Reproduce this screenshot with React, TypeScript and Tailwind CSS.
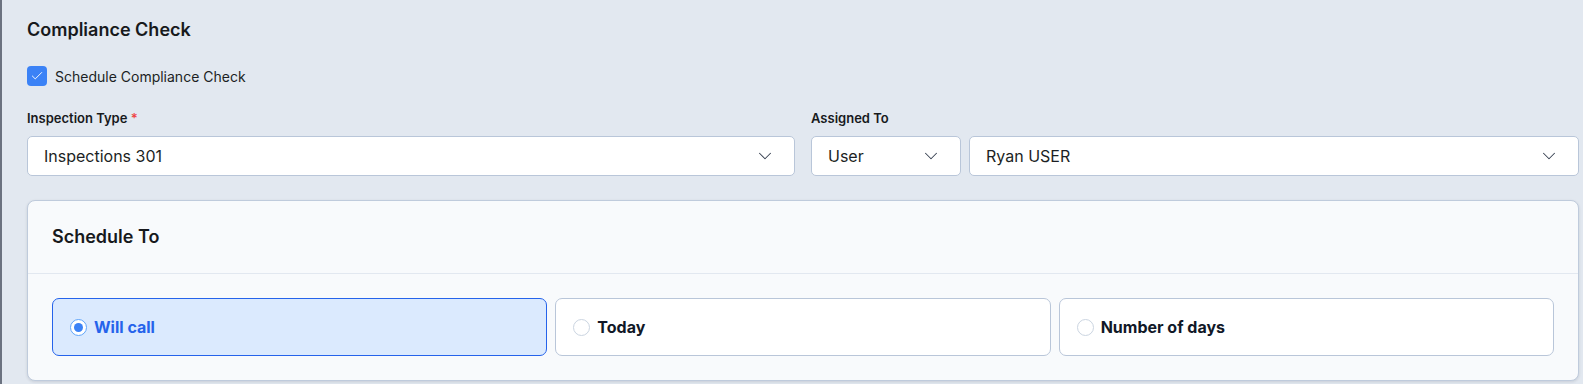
import { useState } from 'react'
import { ChevronDown, Check } from 'lucide-react'

const options = ['Will call', 'Today', 'Number of days']

function Select({ value, className }: { value: string; className?: string }) {
  return (
    <div className={`flex h-10 items-center justify-between rounded-[5px] border border-[#b9c6d9] bg-white pl-4 pr-[18px] ${className ?? ''}`}>
      <span className="text-[16px] text-[#1c1f24]">{value}</span>
      <ChevronDown size={22} strokeWidth={1.1} className="text-[#374151]" />
    </div>
  )
}

export default function App() {
  const [checked, setChecked] = useState(true)
  const [selected, setSelected] = useState(0)

  return (
    <div className="flex min-h-[384px] bg-[#e2e8f0] font-['Inter',sans-serif]">
      <div className="w-[2px] shrink-0 bg-[#6b7280]" />
      <div className="flex-1 pl-[25px] pr-[4px] pt-4">
        <h2 className="text-[18px] leading-7 font-semibold text-[#17191c]">Compliance Check</h2>

        {/* Checkbox */}
        <label className="mt-[22px] flex h-5 items-center gap-2 cursor-pointer" onClick={() => setChecked(!checked)}>
          <span className={`flex h-5 w-5 items-center justify-center rounded-[4px] ${checked ? 'bg-[#3b82f6]' : 'border border-[#b9c6d9] bg-white'}`}>
            {checked && <Check size={14} strokeWidth={1.6} className="text-white" />}
          </span>
          <span className="text-[14px] text-[#1c1f24]">Schedule Compliance Check</span>
        </label>

        {/* Fields */}
        <div className="mt-[22px] grid grid-cols-2 gap-4">
          <div>
            <div className="text-[13px] leading-5 font-semibold text-[#17191c]">
              Inspection Type <span className="text-[#ef4444]">*</span>
            </div>
            <Select value="Inspections 301" className="mt-2" />
          </div>
          <div>
            <div className="text-[13px] leading-5 font-semibold text-[#17191c]">Assigned To</div>
            <div className="mt-2 flex gap-2">
              <Select value="User" className="w-[150px]" />
              <Select value="Ryan USER" className="flex-1" />
            </div>
          </div>
        </div>

        {/* Schedule To card */}
        <div className="mt-6 rounded-lg border border-[#bfcbdc] bg-[#f8fafc] shadow-[0_1px_3px_rgba(15,23,42,0.12)]">
          <div className="border-b border-[#e2e8f0] px-6 py-6">
            <h3 className="text-[18px] leading-6 font-semibold text-[#17191c]">Schedule To</h3>
          </div>
          <div className="grid grid-cols-3 gap-2 px-6 py-6">
            {options.map((opt, i) => {
              const active = selected === i
              return (
                <button
                  key={opt}
                  onClick={() => setSelected(i)}
                  className={`flex h-[58px] items-center gap-[7px] rounded-[7px] border pl-[17px] text-left ${active ? 'border-[#2563eb] bg-[#dbeafe]' : 'border-[#b9c6d9] bg-white'}`}
                >
                  <span className={`flex h-[17px] w-[17px] items-center justify-center rounded-full border bg-white ${active ? 'border-[#60a5fa]' : 'border-[#cbd5e1]'}`}>
                    {active && <span className="h-[9px] w-[9px] rounded-full bg-[#3b82f6]" />}
                  </span>
                  <span className={`text-[16px] font-bold ${active ? 'text-[#2563eb]' : 'text-[#111827]'}`}>{opt}</span>
                </button>
              )
            })}
          </div>
        </div>
      </div>
    </div>
  )
}
